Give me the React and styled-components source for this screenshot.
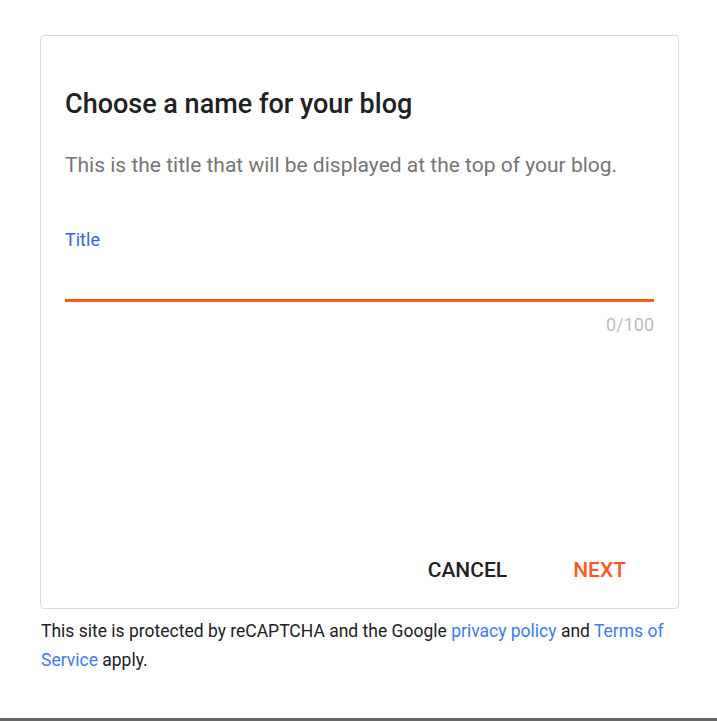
import React, { useState } from 'react';
import styled, { createGlobalStyle } from 'styled-components';

const GlobalStyle = createGlobalStyle`
  html, body {
    margin: 0;
    padding: 0;
    background: #fff;
    font-family: Roboto, 'Noto Sans', sans-serif;
  }
`;

const Page = styled.div`
  height: 721px;
  display: flex;
  flex-direction: column;
  overflow: hidden;
`;

const Dialog = styled.div`
  flex: 1;
  padding: 35px 38px 0 40px;
  background: white;
`;

const Card = styled.div`
  height: 574px;
  box-sizing: border-box;
  border: 1px solid #d5dce1;
  border-radius: 4px;
  display: flex;
  flex-direction: column;
  padding: 52px 24px 0 24px;
`;

const Heading = styled.h2`
  margin: 0;
  font-size: 27px;
  font-weight: 500;
  line-height: 32px;
  color: #212121;
`;

const Subtitle = styled.p`
  margin: 31px 0 0;
  font-size: 21px;
  line-height: 28px;
  color: #757575;
`;

const Field = styled.label`
  margin-top: 49px;
  display: flex;
  flex-direction: column;
`;

const FieldLabel = styled.span`
  font-size: 18px;
  line-height: 24px;
  color: #3367d6;
`;

const Input = styled.input`
  margin-top: 20px;
  border: none;
  border-bottom: 3px solid #ff5722;
  outline: none;
  font-family: inherit;
  font-size: 20px;
  height: 27px;
  padding: 0;
  color: #212121;
  background: transparent;
`;

const Counter = styled.span`
  margin-top: 11px;
  align-self: flex-end;
  font-size: 18px;
  line-height: 24px;
  color: #bdbdbd;
`;

const Actions = styled.div`
  margin-top: auto;
  display: flex;
  justify-content: flex-end;
  gap: 18px;
  padding: 0 4px 20px 0;
`;

const Button = styled.button`
  background: none;
  border: none;
  font-family: inherit;
  font-size: 21px;
  font-weight: 500;
  text-transform: uppercase;
  height: 36px;
  padding: 0 24px;
  cursor: pointer;
  color: ${p => (p.$primary ? '#ff5722' : '#212121')};
`;

const Notice = styled.p`
  margin: 8px 0 0 1px;
  font-size: 17.5px;
  line-height: 29px;
  color: #212121;

  a {
    color: #3d7bf0;
    text-decoration: none;
  }
`;

const Backdrop = styled.div`
  height: 3px;
  background: #666;
`;

export default function App() {
  const [title, setTitle] = useState('');

  return (
    <Page>
      <GlobalStyle />
      <Dialog>
        <Card>
          <Heading>Choose a name for your blog</Heading>
          <Subtitle>This is the title that will be displayed at the top of your blog.</Subtitle>
          <Field>
            <FieldLabel>Title</FieldLabel>
            <Input value={title} maxLength={100} onChange={e => setTitle(e.target.value)} />
          </Field>
          <Counter>{title.length}/100</Counter>
          <Actions>
            <Button>Cancel</Button>
            <Button $primary>Next</Button>
          </Actions>
        </Card>
        <Notice>
          This site is protected by reCAPTCHA and the Google <a href="#">privacy policy</a> and{' '}
          <a href="#">Terms of Service</a> apply.
        </Notice>
      </Dialog>
      <Backdrop />
    </Page>
  );
}
